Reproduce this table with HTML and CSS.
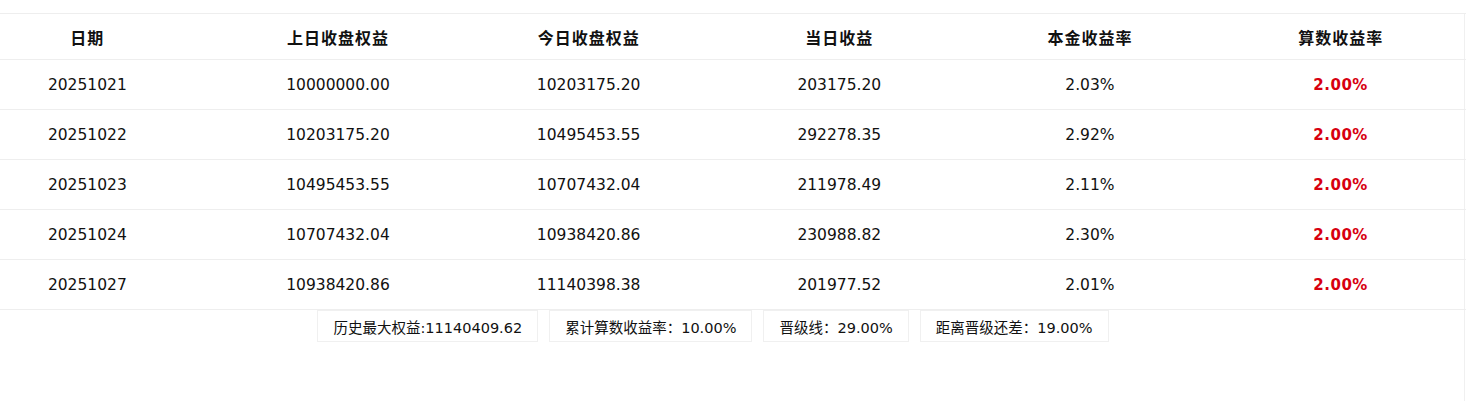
FILE: index.html
```html
<!DOCTYPE html>
<html lang="zh">
<head>
<meta charset="utf-8">
<link rel="stylesheet" href="styles.css">
</head>
<body>
<div class="page">
  <div class="sheet">
    <table class="grid">
      <thead>
        <tr><th>日期</th><th>上日收盘权益</th><th>今日收盘权益</th><th>当日收益</th><th>本金收益率</th><th>算数收益率</th></tr>
      </thead>
      <tbody>
        <tr><td>20251021</td><td>10000000.00</td><td>10203175.20</td><td>203175.20</td><td>2.03%</td><td class="red">2.00%</td></tr>
        <tr><td>20251022</td><td>10203175.20</td><td>10495453.55</td><td>292278.35</td><td>2.92%</td><td class="red">2.00%</td></tr>
        <tr><td>20251023</td><td>10495453.55</td><td>10707432.04</td><td>211978.49</td><td>2.11%</td><td class="red">2.00%</td></tr>
        <tr><td>20251024</td><td>10707432.04</td><td>10938420.86</td><td>230988.82</td><td>2.30%</td><td class="red">2.00%</td></tr>
        <tr><td>20251027</td><td>10938420.86</td><td>11140398.38</td><td>201977.52</td><td>2.01%</td><td class="red">2.00%</td></tr>
      </tbody>
    </table>
    <div class="summary">
      <div class="chip">历史最大权益:11140409.62</div>
      <div class="chip">累计算数收益率：10.00%</div>
      <div class="chip">晋级线：29.00%</div>
      <div class="chip">距离晋级还差：19.00%</div>
    </div>
  </div>
</div>
</body>
</html>
```

FILE: styles.css
```css
html, body {
  margin: 0;
  padding: 0;
  background: #fff;
  overflow: hidden;
}
body {
  font-family: "DejaVu Sans", "Noto Sans CJK SC", sans-serif;
  color: #111;
}
.page {
  padding-top: 13px;
  height: 401px;
  box-sizing: border-box;
}
.sheet {
  margin-left: -38px;
  width: 1503px;
  border-right: 1px solid #f0f0f0;
  height: 388px;
  box-sizing: border-box;
}
.grid {
  width: 1504px;
  border-collapse: collapse;
  table-layout: fixed;
}
.grid th, .grid td {
  text-align: center;
  padding: 0;
  border-top: 1px solid #eeeeee;
}
.grid th {
  height: 45px;
  font-family: "Noto Sans CJK SC", sans-serif;
  font-size: 16px;
  font-weight: 700;
  letter-spacing: 1px;
  color: #111;
}
.grid td {
  height: 49px;
  font-size: 15.5px;
  color: #111;
}
.grid tbody tr:last-child td {
  border-bottom: 1px solid #eeeeee;
}
.grid td.red {
  color: #d7000f;
  font-weight: 700;
  font-size: 15px;
  letter-spacing: 0.5px;
}
.summary {
  display: flex;
  justify-content: center;
  gap: 11px;
  margin-top: 0;
}
.chip {
  height: 32px;
  box-sizing: border-box;
  border: 1px solid #f0f0f0;
  padding: 0 15px;
  display: flex;
  align-items: center;
  font-size: 14.5px;
  color: #111;
}
```
